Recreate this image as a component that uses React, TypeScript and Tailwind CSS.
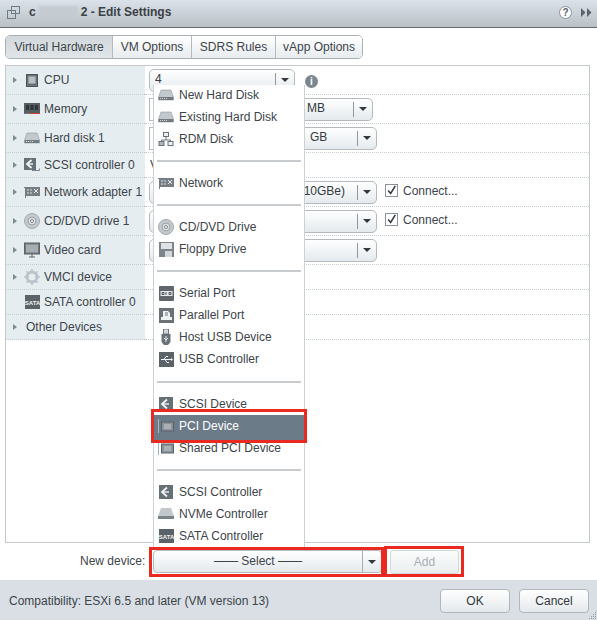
import { ReactElement } from "react";

const DiskIcon = () => (
	<svg width="16" height="14" viewBox="0 0 16 14">
		<path d="M3 2h10l2.500 7v3H.5V9z" fill="#c2c8cc" stroke="#929a9f" strokeWidth=".6" />
		<path d="M.7 9h14.600v3H.7z" fill="#737b81" />
		<path d="M2 10.500h7" stroke="#d5dadd" strokeDasharray="1 1" />
	</svg>
);

const RdmIcon = () => (
	<svg width="16" height="16" viewBox="0 0 16 16" fill="#eef1f3" stroke="#69727a">
		<path d="M8 5v4M3.500 11V9h9v2" fill="none" />
		<rect x="5.500" y="1.500" width="5" height="4" />
		<rect x="1" y="10.500" width="5" height="4" fill="#aeb6bc" />
		<rect x="10" y="10.500" width="5" height="4" />
	</svg>
);

const NicIcon = () => (
	<svg width="16" height="14" viewBox="0 0 16 14">
		<path d="M0 2h16v9H2v2H1V3H0z" fill="#767e84" />
		<path d="M3 4h2v2H3zM6 4h2v2H6zM3 7h2v2H3zM6 7h2v2H6z" fill="#a8b0b6" />
		<path d="M10 4l4 4M14 4l-4 4" stroke="#e8ecee" />
	</svg>
);

const ChipIcon = () => (
	<svg width="16" height="14" viewBox="0 0 16 14">
		<path d="M.5 0v14" stroke="#a9b3ba" />
		<rect x="3.500" y="3" width="12" height="9" fill="#8b9399" stroke="#59626a" />
		<rect x="6" y="5" width="7" height="5" fill="#a9b1b7" />
	</svg>
);

const CpuIcon = () => (
	<svg width="12" height="13" viewBox="0 0 12 13">
		<rect x=".5" y=".5" width="11" height="12" fill="#6a7278" stroke="#4d5459" />
		<rect x="2.500" y="2.500" width="7" height="7" fill="#b9c0c5" />
	</svg>
);

const MemoryIcon = () => (
	<svg width="16" height="12" viewBox="0 0 16 12">
		<rect x="0" y="0" width="16" height="10" fill="#565d62" />
		<path d="M2 2h3v5H2zM6.500 2h3v5h-3zM11 2h3v5h-3z" fill="#30353a" />
		<path d="M6 10.500h10" stroke="#d43a30" />
		<path d="M0 10.500h6" stroke="#70787e" />
	</svg>
);

const ScsiIcon = ({ tail = false }: { tail?: boolean }) => (
	<svg width="16" height="16" viewBox="0 0 16 16">
		<rect x={tail ? 0 : 1} y="1" width={tail ? 12 : 14} height={tail ? 12 : 14} fill="#667077" />
		<path d={tail ? "M7.500 3L3 7l4.500 4" : "M9 3.500L4 8l5 4.500"} fill="none" stroke="#f1f3f4" strokeWidth="1.800" />
		<path d={tail ? "M4 7h5" : "M5 8h6"} stroke="#f1f3f4" strokeWidth="1.400" />
		{tail && <path d="M8 13.500h7.500v-2" fill="none" stroke="#7b8389" />}
	</svg>
);

const CdIcon = () => (
	<svg width="16" height="16" viewBox="0 0 16 16">
		<circle cx="8" cy="8" r="7.500" fill="#c3c9cd" stroke="#a3aaaf" />
		<circle cx="8" cy="8" r="4" fill="#dce0e3" stroke="#9aa1a6" />
		<circle cx="8" cy="8" r="1.500" fill="#fff" stroke="#7e868b" />
	</svg>
);

const MonitorIcon = () => (
	<svg width="16" height="16" viewBox="0 0 16 16">
		<rect x=".5" y="1" width="15" height="11" fill="#70787e" stroke="#5b6369" />
		<path d="M2 2.500h12v8H2z" fill="#a6aeb3" />
		<path d="M5 15h6M8 12v3" stroke="#5b6369" />
	</svg>
);

const GearIcon = () => (
	<svg width="16" height="16" viewBox="0 0 16 16">
		<circle cx="8" cy="8" r="5" fill="none" stroke="#bcc3c8" strokeWidth="3" />
		<path d="M8 0v16M0 8h16M2.300 2.300l11.400 11.400M13.700 2.300L2.300 13.700" stroke="#bcc3c8" strokeWidth="1.500" strokeDasharray="2.500 11" />
	</svg>
);

const SataIcon = () => (
	<svg width="15" height="14" viewBox="0 0 15 14">
		<rect width="15" height="14" fill="#5b6268" />
		<text x="7.500" y="9.500" textAnchor="middle" fontSize="6" fontWeight="700" fill="#f3f5f6" fontFamily="'Liberation Sans', sans-serif">SATA</text>
	</svg>
);

const FloppyIcon = () => (
	<svg width="15" height="15" viewBox="0 0 15 15">
		<rect width="15" height="15" fill="#7d858b" />
		<rect x="2" y="1" width="11" height="6" fill="#dfe3e6" />
		<rect x="6" y="9" width="7" height="6" fill="#d2d7da" />
	</svg>
);

const SerialIcon = () => (
	<svg width="15" height="15" viewBox="0 0 15 15">
		<rect width="15" height="15" rx="1" fill="#5f676d" />
		<rect x="1.500" y="5" width="12" height="5" fill="#e6eaec" />
		<path d="M3 6.500h2v2H3zM7 6v3M10 6.500h2v2h-2z" fill="none" stroke="#4e555a" />
	</svg>
);

const ParallelIcon = () => (
	<svg width="15" height="15" viewBox="0 0 15 15">
		<rect width="15" height="15" fill="#6a7278" />
		<path d="M4 3h5l2 2v4h2v3H2V9h2z" fill="#eef1f2" />
		<path d="M6 5h3M6 7h3" stroke="#6a7278" />
	</svg>
);

const UsbStickIcon = () => (
	<svg width="10" height="16" viewBox="0 0 10 16">
		<rect x="2.500" y="0" width="5" height="5" fill="#d4d9dc" stroke="#6e767c" />
		<path d="M.5 5h9v8L7 16H3L.5 13z" fill="#6a7278" />
		<path d="M5 7v6M3 9l2 2 2-2" fill="none" stroke="#e3e7e9" />
	</svg>
);

const UsbIcon = () => (
	<svg width="15" height="15" viewBox="0 0 15 15">
		<rect width="15" height="15" fill="#5b6268" />
		<path d="M2 7.500h10M5 7.500l2-3h2M6 7.500l2 3h2" fill="none" stroke="#f1f3f4" />
		<path d="M12 6l2 1.500L12 9z" fill="#f1f3f4" />
	</svg>
);

const NvmeIcon = () => (
	<svg width="16" height="12" viewBox="0 0 16 12">
		<path d="M3 0h10l3 8v3H0V8z" fill="#c2c8cc" />
		<path d="M0 8h16v3H0z" fill="#7b8389" />
	</svg>
);

const MenuIconWrap = ({ children }: { children: ReactElement }) => (
	<span className="flex h-[16px] w-[16px] shrink-0 items-center justify-center">{children}</span>
);

const Arrow = () => <span className="h-0 w-0 border-y-[3px] border-l-[4px] border-y-transparent border-l-[#7f8a92]" />;

const DownCaret = () => <span className="h-0 w-0 border-x-[4px] border-t-[4px] border-x-transparent border-t-[#33393e]" />;

const SelectBox = ({ className, label, labelClass }: { className: string; label?: string; labelClass: string }) => (
	<div className={`flex h-[23px] items-center rounded-[5px] border border-[#b4babd] bg-gradient-to-b from-[#ffffff] to-[#e4eaed] ${className}`}>
		<span className={`flex-1 pb-[3px] text-[12px] text-[#333a40] ${labelClass}`}>{label}</span>
		<span className="h-[15px] w-px bg-[#8f979c]" />
		<span className="flex w-[18px] justify-center"><DownCaret /></span>
	</div>
);

const Connect = () => (
	<div className="mb-[3px] ml-[8px] flex items-center">
		<span className="flex h-[13px] w-[13px] items-center justify-center border border-[#8d9499] bg-white">
			<svg width="13" height="13" viewBox="0 0 13 13"><path d="M2.500 6.500l3 3.500 5.500-9" fill="none" stroke="#333a40" strokeWidth="1.800" /></svg>
		</span>
		<span className="ml-[5px] text-[12px] text-[#3d444a]">Connect...</span>
	</div>
);

const rows = [
	{ label: "CPU", icon: <CpuIcon />, arrow: true, rowClass: "h-[29px]", right: <div className="flex items-center"><SelectBox className="w-[146px]" label="4" labelClass="pl-[5px]" /><span className="ml-[10px] mt-[2px] flex h-[13px] w-[13px] items-center justify-center rounded-full bg-[#7b868e] text-[10px] font-bold text-white">i</span></div> },
	{ label: "Memory", icon: <MemoryIcon />, arrow: true, rowClass: "h-[29px]", right: <div className="flex"><div className="h-[23px] w-[140px] border border-[#b4babd] bg-white" /><SelectBox className="w-[84px]" label="MB" labelClass="pl-[17px]" /></div> },
	{ label: "Hard disk 1", icon: <DiskIcon />, arrow: true, rowClass: "h-[29px]", right: <div className="flex"><div className="h-[23px] w-[140px] border border-[#b4babd] bg-white" /><SelectBox className="w-[88px]" label="GB" labelClass="pl-[20px]" /></div> },
	{ label: "SCSI controller 0", icon: <ScsiIcon tail />, arrow: true, rowClass: "h-[25px]", right: <span className="pl-[1px] text-[12px] text-[#3d444a]">V</span> },
	{ label: "Network adapter 1", icon: <NicIcon />, arrow: true, rowClass: "h-[29px]", right: <div className="flex items-center"><SelectBox className="w-[228px]" label="10GBe)" labelClass="pr-[12px] text-right" /><Connect /></div> },
	{ label: "CD/DVD drive 1", icon: <CdIcon />, arrow: true, rowClass: "h-[29px]", right: <div className="flex items-center"><SelectBox className="w-[228px]" labelClass="" /><Connect /></div> },
	{ label: "Video card", icon: <MonitorIcon />, arrow: true, rowClass: "h-[29px]", right: <SelectBox className="w-[228px]" labelClass="" /> },
	{ label: "VMCI device", icon: <GearIcon />, arrow: true, rowClass: "h-[25px]", right: null },
	{ label: "SATA controller 0", icon: <SataIcon />, arrow: false, rowClass: "h-[25px]", right: null },
	{ label: "Other Devices", icon: null, arrow: true, rowClass: "h-[25px]", right: null },
];

const menuGroups = [
	[
		{ label: "New Hard Disk", icon: <DiskIcon /> },
		{ label: "Existing Hard Disk", icon: <DiskIcon /> },
		{ label: "RDM Disk", icon: <RdmIcon /> },
	],
	[{ label: "Network", icon: <NicIcon /> }],
	[
		{ label: "CD/DVD Drive", icon: <CdIcon /> },
		{ label: "Floppy Drive", icon: <FloppyIcon /> },
	],
	[
		{ label: "Serial Port", icon: <SerialIcon /> },
		{ label: "Parallel Port", icon: <ParallelIcon /> },
		{ label: "Host USB Device", icon: <UsbStickIcon /> },
		{ label: "USB Controller", icon: <UsbIcon /> },
	],
	[
		{ label: "SCSI Device", icon: <ScsiIcon /> },
		{ label: "PCI Device", icon: <ChipIcon />, selected: true },
		{ label: "Shared PCI Device", icon: <ChipIcon /> },
	],
	[
		{ label: "SCSI Controller", icon: <ScsiIcon /> },
		{ label: "NVMe Controller", icon: <NvmeIcon /> },
		{ label: "SATA Controller", icon: <SataIcon /> },
	],
];

const tabs = [
	{ label: "VM Options", width: "w-[79px]" },
	{ label: "SDRS Rules", width: "w-[84px]" },
	{ label: "vApp Options", width: "flex-1" },
];

const App = () => {
	return (
		<div className="relative flex h-[620px] w-[597px] flex-col overflow-hidden bg-white font-['Liberation_Sans',Arial,sans-serif] text-[12px] text-[#3d444a]">
			{/* title bar */}
			<div className="flex h-[28px] shrink-0 items-center border-b border-[#5f6a72] bg-gradient-to-b from-[#dbe2e9] to-[#b9c0c6] pb-[3px] pl-[7px] pr-[5px]">
				<svg width="13" height="13" viewBox="0 0 13 13" fill="none" stroke="#6e7b85"><rect x="4.500" y=".5" width="8" height="7" /><rect x=".5" y="4.500" width="8" height="8" /></svg>
				<span className="ml-[9px] text-[12px] font-bold text-[#3b4147]">c</span>
				<span className="mx-[3px] h-[12px] w-[39px] bg-[#c4cbd1] blur-[1px]" />
				<span className="text-[12px] font-bold text-[#3b4147]">2 - Edit Settings</span>
				<span className="ml-auto flex h-[13px] w-[13px] items-center justify-center rounded-full border border-[#8a949b] bg-white text-[10px] font-bold text-[#5b646b]">?</span>
				<svg className="ml-[9px]" width="11" height="9" viewBox="0 0 11 9" fill="#5b646b"><path d="M0 0l4.500 4.500L0 9zM6 0l4.500 4.500L6 9z" /></svg>
			</div>

			<div className="flex-1 px-[5px] pt-[7px]">
				{/* tabs */}
				<div className="flex h-[24px] w-[358px] overflow-hidden rounded-[5px] border border-[#a9b0b4] text-[12px]">
					<div className="flex w-[106px] items-center justify-center bg-gradient-to-b from-[#d2d8dc] to-[#dfe5e8] text-[#3d444a]">Virtual Hardware</div>
					{tabs.map((t) => (
						<div key={t.label} className={`flex items-center justify-center border-l border-[#b4babd] bg-gradient-to-b from-[#ffffff] to-[#e7ecef] text-[#3d444a] ${t.width}`}>{t.label}</div>
					))}
				</div>

				{/* device list */}
				<div className="mt-[6px] h-[478px] w-[585px] border border-[#c4c9cc]">
					{rows.map((r) => (
						<div key={r.label} className={`flex ${r.rowClass}`}>
							<div className="flex w-[139px] shrink-0 items-center border-b border-dotted border-[#c3ccd2] bg-[#e6edf1] pl-[7px]">
								<span className="flex w-[9px] shrink-0">{r.arrow && <Arrow />}</span>
								{r.icon && <span className="ml-[2px] flex w-[16px] shrink-0 justify-center">{r.icon}</span>}
								<span className="ml-[4px] whitespace-nowrap text-[12px] text-[#3d444a]">{r.label}</span>
							</div>
							<div className="flex min-w-0 flex-1 items-center border-b border-dotted border-[#c3ccd2] pl-[4px]">{r.right}</div>
						</div>
					))}
				</div>

				{/* new device */}
				<div className="flex h-[37px] items-center">
					<span className="ml-[75px] w-[64px] whitespace-nowrap pb-[2px] text-[12px] text-[#3d444a]">New device:</span>
					<div className="ml-[9px] flex h-[23px] w-[229px] items-center rounded-[4px] border border-[#b4babd] bg-gradient-to-b from-[#ffffff] to-[#e3e9ec]">
						<span className="flex-1 pb-[1px] text-center text-[12px] text-[#3d444a]">—— Select ——</span>
						<span className="h-full w-px bg-[#a5adb2]" />
						<span className="flex w-[18px] justify-center"><DownCaret /></span>
					</div>
					<div className="ml-[8px] flex h-[24px] w-[69px] items-center justify-center rounded-[3px] border border-[#d2d7da] bg-gradient-to-b from-[#fbfcfc] to-[#eaeef0] text-[12px] text-[#a9afb4]">Add</div>
				</div>
			</div>

			{/* footer */}
			<div className="flex h-[41px] shrink-0 items-center bg-[#d9dfe5] pl-[9px] pr-[8px]">
				<span className="text-[12px] text-[#3d444a]">Compatibility: ESXi 6.5 and later (VM version 13)</span>
				<div className="ml-auto flex gap-[9px]">
					<div className="flex h-[24px] w-[70px] items-center justify-center rounded-[4px] border border-[#b0b7bc] bg-gradient-to-b from-[#ffffff] to-[#e4e9ec] text-[12px] text-[#30363b]">OK</div>
					<div className="flex h-[24px] w-[70px] items-center justify-center rounded-[4px] border border-[#b0b7bc] bg-gradient-to-b from-[#ffffff] to-[#e4e9ec] text-[12px] text-[#30363b]">Cancel</div>
				</div>
			</div>

			{/* resize grip */}
			<svg className="absolute bottom-0 right-0" width="8" height="8" viewBox="0 0 8 8" fill="#8d969c"><path d="M6 0h1v1H6zM4 2h1v1H4zM6 2h1v1H6zM2 4h1v1H2zM4 4h1v1H4zM6 4h1v1H6zM0 6h1v1H0zM2 6h1v1H2zM4 6h1v1H4zM6 6h1v1H6z" /></svg>

			{/* add device menu */}
			<div className="absolute left-[153px] top-[85px] h-[462px] w-[152px] overflow-hidden border-x border-[#ccd1d4] bg-white">
				<div className="-mt-[1px]">
					{menuGroups.map((group, i) => (
						<div key={i} className={i === 3 ? "mx-[3px] mb-[10px] border-b-2 border-[#c8cccf] pb-[11px]" : i < menuGroups.length - 1 ? "mx-[3px] mb-[10px] border-b-2 border-[#c8cccf] pb-[10px]" : "mx-[3px]"}>
							{group.map((item) => (
								<div key={item.label} className={`-mx-[3px] flex h-[22px] items-center pl-[4px] ${"selected" in item && item.selected ? "bg-[#6b7b88] text-white shadow-[0_4px_0_#6b7b88]" : "text-[#3d444a]"}`}>
									<MenuIconWrap>{item.icon}</MenuIconWrap>
									<span className="ml-[5px] whitespace-nowrap text-[12px]">{item.label}</span>
								</div>
							))}
						</div>
					))}
				</div>
			</div>

			{/* red highlight boxes */}
			<div className="absolute left-[151px] top-[409px] h-[34px] w-[156px] border-[3px] border-[#ea2a20]" />
			<div className="absolute left-[149px] top-[547px] h-[30px] w-[235px] border-[3px] border-[#ea2a20]" />
			<div className="absolute left-[384px] top-[546px] h-[31px] w-[80px] border-[3px] border-[#ea2a20]" />
		</div>
	);
};

export default App;
